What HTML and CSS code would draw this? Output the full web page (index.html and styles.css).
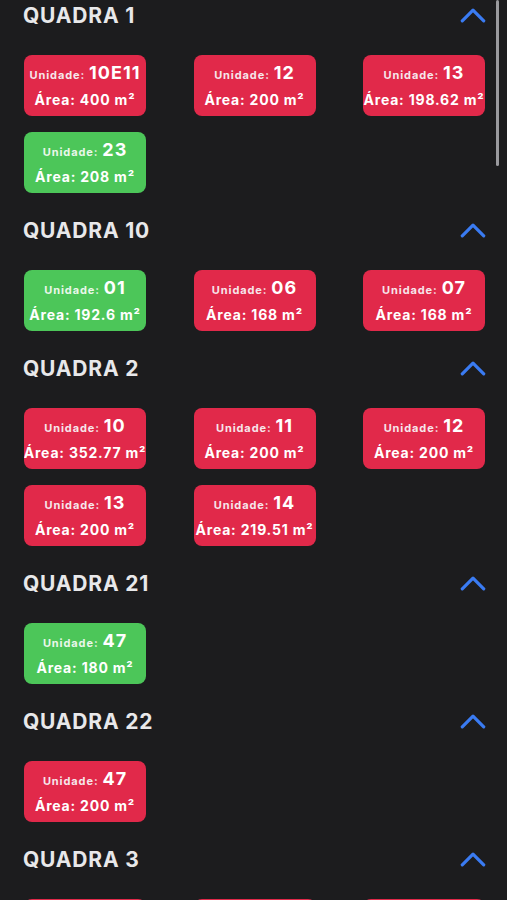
FILE: index.html
```html
<!DOCTYPE html>
<html lang="pt-BR">
<head>
<meta charset="utf-8">
<link rel="stylesheet" href="styles.css">
<title>Quadras</title>
</head>
<body>
<div class="scrollbar"></div>
<main class="list">

<section class="quadra">
  <div class="quadra-head"><h2>QUADRA 1</h2><svg class="chev" viewBox="0 0 24 14"><path d="M2 12 L12 2 L22 12"/></svg></div>
  <div class="grid">
    <div class="card red"><p class="l1"><span class="lab">Unidade:</span> <span class="num">10E11</span></p><p class="l2">Área: 400 m²</p></div>
    <div class="card red"><p class="l1"><span class="lab">Unidade:</span> <span class="num">12</span></p><p class="l2">Área: 200 m²</p></div>
    <div class="card red"><p class="l1"><span class="lab">Unidade:</span> <span class="num">13</span></p><p class="l2">Área: 198.62 m²</p></div>
    <div class="card green"><p class="l1"><span class="lab">Unidade:</span> <span class="num">23</span></p><p class="l2">Área: 208 m²</p></div>
  </div>
</section>

<section class="quadra">
  <div class="quadra-head"><h2>QUADRA 10</h2><svg class="chev" viewBox="0 0 24 14"><path d="M2 12 L12 2 L22 12"/></svg></div>
  <div class="grid">
    <div class="card green"><p class="l1"><span class="lab">Unidade:</span> <span class="num">01</span></p><p class="l2">Área: 192.6 m²</p></div>
    <div class="card red"><p class="l1"><span class="lab">Unidade:</span> <span class="num">06</span></p><p class="l2">Área: 168 m²</p></div>
    <div class="card red"><p class="l1"><span class="lab">Unidade:</span> <span class="num">07</span></p><p class="l2">Área: 168 m²</p></div>
  </div>
</section>

<section class="quadra">
  <div class="quadra-head"><h2>QUADRA 2</h2><svg class="chev" viewBox="0 0 24 14"><path d="M2 12 L12 2 L22 12"/></svg></div>
  <div class="grid">
    <div class="card red"><p class="l1"><span class="lab">Unidade:</span> <span class="num">10</span></p><p class="l2">Área: 352.77 m²</p></div>
    <div class="card red"><p class="l1"><span class="lab">Unidade:</span> <span class="num">11</span></p><p class="l2">Área: 200 m²</p></div>
    <div class="card red"><p class="l1"><span class="lab">Unidade:</span> <span class="num">12</span></p><p class="l2">Área: 200 m²</p></div>
    <div class="card red"><p class="l1"><span class="lab">Unidade:</span> <span class="num">13</span></p><p class="l2">Área: 200 m²</p></div>
    <div class="card red"><p class="l1"><span class="lab">Unidade:</span> <span class="num">14</span></p><p class="l2">Área: 219.51 m²</p></div>
  </div>
</section>

<section class="quadra">
  <div class="quadra-head"><h2>QUADRA 21</h2><svg class="chev" viewBox="0 0 24 14"><path d="M2 12 L12 2 L22 12"/></svg></div>
  <div class="grid">
    <div class="card green"><p class="l1"><span class="lab">Unidade:</span> <span class="num">47</span></p><p class="l2">Área: 180 m²</p></div>
  </div>
</section>

<section class="quadra">
  <div class="quadra-head"><h2>QUADRA 22</h2><svg class="chev" viewBox="0 0 24 14"><path d="M2 12 L12 2 L22 12"/></svg></div>
  <div class="grid">
    <div class="card red"><p class="l1"><span class="lab">Unidade:</span> <span class="num">47</span></p><p class="l2">Área: 200 m²</p></div>
  </div>
</section>

<section class="quadra">
  <div class="quadra-head"><h2>QUADRA 3</h2><svg class="chev" viewBox="0 0 24 14"><path d="M2 12 L12 2 L22 12"/></svg></div>
  <div class="grid">
    <div class="card red"></div>
    <div class="card red"></div>
    <div class="card red"></div>
  </div>
</section>

</main>
</body>
</html>
```

FILE: styles.css
```css
html, body {
  margin: 0;
  padding: 0;
  background: #1c1c1e;
}
body {
  font-family: Inter, "Liberation Sans", Arial, sans-serif;
  color: #e6e6e8;
  position: relative;
}
.list {
  padding-top: 0;
}
.quadra {
  padding: 0 22px 22px 24px;
}
.quadra-head {
  height: 30px;
  display: flex;
  align-items: center;
  justify-content: space-between;
  margin-left: -1px;
}
.quadra-head h2 {
  margin: 0;
  font-size: 21px;
  font-weight: 700;
  letter-spacing: 0.8px;
  color: #e8e8ea;
}
.chev {
  width: 26px;
  height: 15px;
  margin-right: -1px;
  fill: none;
  stroke: #3a7bf2;
  stroke-width: 3;
  stroke-linecap: round;
  stroke-linejoin: round;
}
.grid {
  margin-top: 25px;
  display: grid;
  grid-template-columns: repeat(3, 122px);
  justify-content: space-between;
  row-gap: 16px;
}
.card {
  height: 61px;
  border-radius: 8px;
  display: flex;
  flex-direction: column;
  align-items: center;
  justify-content: center;
  gap: 5px;
  color: #ffffff;
  font-weight: 700;
  white-space: nowrap;
  overflow: hidden;
}
.card.red { background: #e1294a; }
.card.green { background: #4cc659; }
.card p { margin: 0; }
.l1 {
  display: flex;
  align-items: baseline;
  gap: 4px;
  line-height: 21px;
  margin-top: -2px;
}
.lab {
  font-size: 11px;
  font-weight: 700;
  letter-spacing: 0.9px;
  color: #f6e6ea;
}
.green .lab { color: #eaf7ea; }
.num {
  font-size: 18px;
  font-weight: 700;
  letter-spacing: 1px;
}
.l2 {
  font-size: 14px;
  line-height: 18px;
  letter-spacing: 0.8px;
}
.scrollbar {
  position: absolute;
  top: 0;
  right: 8px;
  width: 3px;
  height: 166px;
  border-radius: 2px;
  background: #9a9a9e;
}
```
